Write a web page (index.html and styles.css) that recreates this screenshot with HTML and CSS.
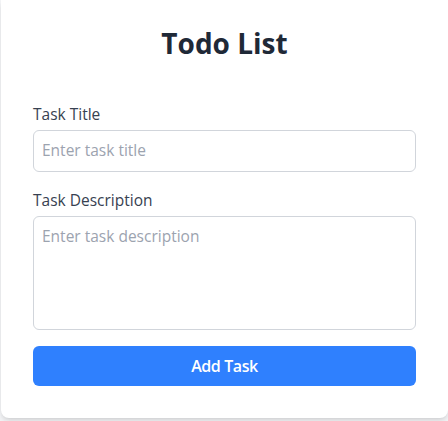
FILE: index.html
```html
<!DOCTYPE html>
<html lang="en">
<head>
<meta charset="utf-8">
<title>Todo List</title>
<link rel="stylesheet" href="styles.css">
</head>
<body>
<main class="card">
  <h1 class="title">Todo List</h1>
  <form class="form">
    <div class="field">
      <label class="label" for="title">Task Title</label>
      <input class="input" id="title" type="text" placeholder="Enter task title">
    </div>
    <div class="field">
      <label class="label" for="desc">Task Description</label>
      <textarea class="input textarea" id="desc" rows="4" placeholder="Enter task description"></textarea>
    </div>
    <button class="button" type="button">Add Task</button>
  </form>
</main>
</body>
</html>
```

FILE: styles.css
```css
* { box-sizing: border-box; }
html, body { margin: 0; padding: 0; }
body {
  background: #f3f4f6;
  font-family: "Open Sans", "Noto Sans", sans-serif;
  width: 448px;
  height: 421px;
  overflow: hidden;
}
.card {
  margin-left: 1px;
  width: 447px;
  background: #fff;
  border-radius: 0 0 8px 8px;
  box-shadow: 0 4px 6px -1px rgba(0,0,0,0.1), 0 2px 4px -2px rgba(0,0,0,0.1);
  padding: 25px 32px 32px;
}
.title {
  margin: 0 0 41px;
  font-size: 28px;
  line-height: 36px;
  font-weight: 700;
  text-align: center;
  color: #1f2937;
}
.form { display: flex; flex-direction: column; }
.field { display: flex; flex-direction: column; margin-bottom: 16px; }
.label {
  font-size: 15.5px;
  line-height: 24px;
  font-weight: 500;
  color: #374151;
  margin-bottom: 4px;
}
.input {
  display: block;
  width: 100%;
  font-family: inherit;
  font-size: 15.5px;
  line-height: 24px;
  padding: 7px 8px 9px;
  border: 1px solid #d1d5db;
  border-radius: 6px;
  color: #1f2937;
  background: #fff;
  outline: none;
}
.input::placeholder { color: #9ca3af; }
.textarea { height: 114px; resize: none; }
.button {
  height: 40px;
  border: none;
  border-radius: 6px;
  background: #2f80fe;
  color: #fff;
  font-family: inherit;
  font-size: 16px;
  font-weight: 600;
  letter-spacing: -0.4px;
  line-height: 24px;
}
```
